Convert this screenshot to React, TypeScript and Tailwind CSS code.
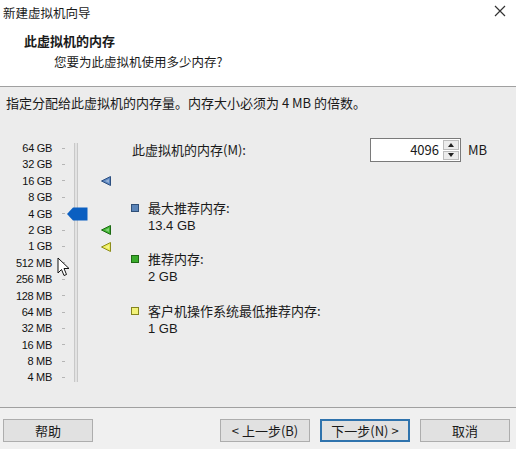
import React from 'react';

const levels = ['64 GB', '32 GB', '16 GB', '8 GB', '4 GB', '2 GB', '1 GB', '512 MB', '256 MB', '128 MB', '64 MB', '32 MB', '16 MB', '8 MB', '4 MB'];

// which row gets a marker triangle
const markers: Record<number, { fill: string; stroke: string }> = {
  2: { fill: '#5b86c0', stroke: '#2d4f80' },
  5: { fill: '#3fb531', stroke: '#1d6a13' },
  6: { fill: '#ecec52', stroke: '#8c8c1c' },
};

function Marker({ fill, stroke }: { fill: string; stroke: string }) {
  return (
    <svg width="10" height="10" viewBox="0 0 10 10">
      <polygon points="9.5,0.5 9.5,9.5 0.5,5" fill={fill} stroke={stroke} strokeWidth="1" />
      <polygon points="8,3 8,7 4,5" fill="#ffffff" opacity="0.35" />
    </svg>
  );
}

function Legend({ color, border, title, value, className }: { color: string; border: string; title: string; value: string; className: string }) {
  return (
    <div className={`flex ${className}`}>
      <div className={`mt-[4px] w-[8px] h-[8px] border ${color} ${border}`} />
      <div className="ml-[9px] flex flex-col">
        <div className="leading-[16px]">{title}</div>
        <div
          className="leading-[15px] mt-[2px] text-[13px]"
          style={{ fontFamily: '"Liberation Sans", sans-serif' }}
        >
          {value}
        </div>
      </div>
    </div>
  );
}

function Btn({ label, primary }: { label: string; primary?: boolean }) {
  return (
    <button
      className={`h-[23px] w-[90px] text-[13px] text-[#1a1a1a] bg-[#e1e1e1] flex items-center justify-center ${
        primary ? 'border-2 border-[#2f73ad]' : 'border border-[#adadad]'
      }`}
    >
      {label}
    </button>
  );
}

export default function App() {
  return (
    <div
      className="w-[516px] h-[449px] flex flex-col bg-[#ececec] text-[#1a1a1a] relative overflow-hidden"
      style={{ fontFamily: '"Noto Sans CJK SC", "Liberation Sans", sans-serif' }}
    >
      {/* title + header */}
      <div className="bg-white h-[87px] border-b border-[#a0a0a0] flex flex-col">
        <div className="h-[27px] flex items-center justify-between pl-[3px] pr-[10px]">
          <span className="text-[12.5px] leading-[16px] -mt-[2px]">新建虚拟机向导</span>
          <svg width="12" height="12" viewBox="0 0 12 12" className="-mt-[6px]">
            <path d="M1 1 L11 11 M11 1 L1 11" stroke="#333" strokeWidth="1.2" />
          </svg>
        </div>
        <div className="pl-[24px] pt-[6px]">
          <div className="text-[13px] font-bold leading-[16px]">此虚拟机的内存</div>
          <div className="text-[12.5px] leading-[16px] mt-[5px] pl-[30px]">您要为此虚拟机使用多少内存?</div>
        </div>
      </div>

      {/* body */}
      <div className="flex-1 flex flex-col">
        <div className="pl-[6px] pt-[8px] text-[13px] leading-[16px]">
          指定分配给此虚拟机的内存量。内存大小必须为 4 MB 的倍数。
        </div>

        <div className="flex items-start mt-[27px]">
          {/* labels */}
          <div
            className="w-[52px] pt-[2px] flex flex-col items-end text-[11px] tracking-[-0.3px] text-[#111]"
            style={{ fontFamily: '"Liberation Sans", sans-serif' }}
          >
            {levels.map((l) => (
              <div key={l} className="h-[16.4px] leading-[16.4px]">{l}</div>
            ))}
          </div>
          {/* ticks */}
          <div className="ml-[10px] w-[3px] pt-[2px] flex flex-col">
            {levels.map((l) => (
              <div key={l} className="h-[16.4px] flex items-center">
                <div className="w-[3px] h-[1px] bg-[#b5b5b5]" />
              </div>
            ))}
          </div>
          {/* track */}
          <div className="ml-[9px] mt-[5px] h-[239px] w-[4px] border-x border-[#c8c8c8] bg-[#e2e2e2] relative">
            <svg width="21" height="14" viewBox="0 0 21 14" className="absolute top-[64px] left-[-8px]">
              <path d="M0 7 L6 0.5 H20.5 V13.5 H6 Z" fill="#0b5fc1" />
            </svg>
          </div>
          {/* markers */}
          <div className="ml-[23px] w-[10px] pt-[2px] flex flex-col">
            {levels.map((l, i) => (
              <div key={l} className="h-[16.4px] flex items-center">
                {markers[i] && <Marker {...markers[i]} />}
              </div>
            ))}
          </div>

          {/* right panel */}
          <div className="ml-[20px] flex-1 flex flex-col text-[13px] leading-[16px]">
            <div className="h-[24px] flex items-center">
              <span className="w-[239px] pl-[1px]">此虚拟机的内存(M):</span>
              <div className="h-[24px] w-[91px] border border-[#7a7a7a] bg-white flex items-center">
                <span className="flex-1 text-right pr-[4px] text-[13px]">4096</span>
                <div className="w-[16px] h-[20px] mr-[1px] flex flex-col gap-[1px]">
                  <div className="flex-1 bg-[#ececec] border border-[#bdbdbd] flex items-center justify-center">
                    <svg width="6" height="4" viewBox="0 0 6 4"><polygon points="0,4 6,4 3,0" fill="#222" /></svg>
                  </div>
                  <div className="flex-1 bg-[#ececec] border border-[#bdbdbd] flex items-center justify-center">
                    <svg width="6" height="4" viewBox="0 0 6 4"><polygon points="0,0 6,0 3,4" fill="#222" /></svg>
                  </div>
                </div>
              </div>
              <span className="ml-[7px]">MB</span>
            </div>

            <Legend className="mt-[38px]" color="bg-[#5a84b8]" border="border-[#2f4f78]" title="最大推荐内存:" value="13.4 GB" />
            <Legend className="mt-[18px]" color="bg-[#3aab2b]" border="border-[#1e6914]" title="推荐内存:" value="2 GB" />
            <Legend className="mt-[19px]" color="bg-[#f2f27a]" border="border-[#85851e]" title="客户机操作系统最低推荐内存:" value="1 GB" />
          </div>
        </div>
      </div>

      {/* footer */}
      <div className="h-[42px] border-t border-[#a0a0a0] bg-[#f0f0f0] flex items-start pt-[11px] pl-[3px] pr-[6px]">
        <Btn label="帮助" />
        <div className="flex-1" />
        <Btn label="< 上一步(B)" />
        <div className="ml-[10px]"><Btn label="下一步(N) >" primary /></div>
        <div className="ml-[10px]"><Btn label="取消" /></div>
      </div>

      {/* mouse cursor */}
      <svg width="13" height="20" viewBox="0 0 13 20" className="absolute left-[57px] top-[257px]">
        <path d="M1 1 V16 L4.5 12.5 L7 18.5 L9.5 17.5 L7 11.5 H12 Z" fill="#fff" stroke="#111" strokeWidth="1" />
      </svg>
    </div>
  );
}
